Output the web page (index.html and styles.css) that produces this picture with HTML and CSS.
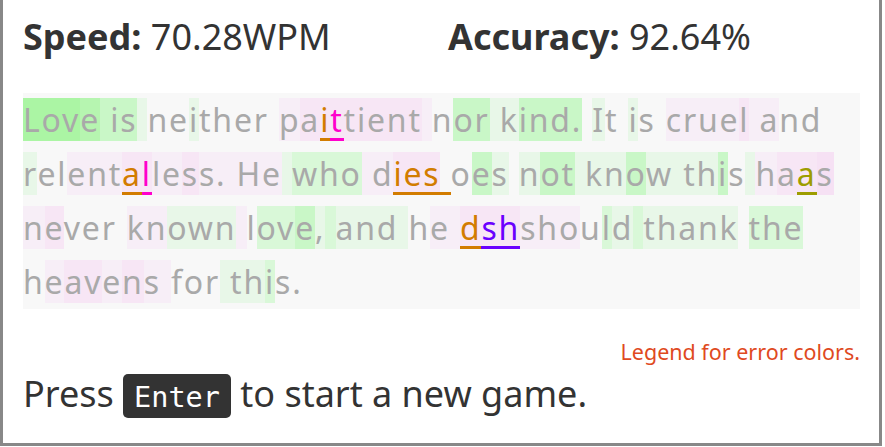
FILE: index.html
```html
<!DOCTYPE html>
<html lang="en">
<head>
<meta charset="utf-8">
<title>Typing result</title>
<link rel="stylesheet" href="styles.css">
</head>
<body>
<div class="game">
  <div class="stats">
    <div class="stat stat-speed"><b>Speed:</b> 70.28WPM</div>
    <div class="stat"><b>Accuracy:</b> 92.64%</div>
  </div>
  <div class="passage">
    <div class="line"><span class="g1">Lov</span><span class="g1b">e</span><span class="g3"> is</span><span class="g5"> </span>ne<span class="g5">i</span>ther <span class="p3">p</span><span class="p2">a<span class="e-or">i</span><span class="e-mg">t</span>tient</span><span class="p3"> </span>n<span class="g3">or</span><span class="g5"> k</span><span class="g3">ind.</span> <span class="g5">I</span>t <span class="g5">i</span>s <span class="p3">crue</span><span class="p2">l</span><span class="p3"> a</span>nd</div>
    <div class="line"><span class="g5">r</span>el<span class="p3">ent</span><span class="p2"><span class="e-or">a</span><span class="e-mg">l</span></span><span class="p3">le</span><span class="p2">s</span><span class="p3">s. He</span><span class="g5"> </span><span class="g4">who</span><span class="p3"> d</span><span class="p2"><span class="e-or">ies</span></span><span class="e-or"> </span>o<span class="g3">e</span><span class="g5">s</span> <span class="g5">n</span><span class="g3">ot</span><span class="g5"> kn</span><span class="g3">o</span><span class="g5">w th</span><span class="g3">i</span>s<span class="g5"> </span><span class="p3">h</span><span class="p2">a<span class="e-ol">a</span></span><span class="p1">s</span></div>
    <div class="line"><span class="p3">n</span><span class="p2">e</span>ver <span class="p3">kn</span><span class="g5">own</span><span class="p3"> </span>l<span class="g4">ov</span><span class="g3">e</span><span class="g5">,</span><span class="g4"> </span><span class="g5">and </span>h<span class="p3">e </span><span class="p2"><span class="e-or">d</span><span class="e-pu">sh</span></span><span class="p3">sho</span>u<span class="g4">l</span><span class="g5">d</span><span class="g4"> </span><span class="g5">thank</span> <span class="g4">the</span></div>
    <div class="line">h<span class="p3">e</span><span class="p2">av</span><span class="p3">e</span><span class="p2">n</span><span class="p3">s </span>for<span class="g5"> th</span><span class="g4">i</span>s.</div>
  </div>
  <div class="legend">Legend for error colors.</div>
  <div class="restart">Press <kbd class="key">Enter</kbd> to start a new game.</div>
</div>
</body>
</html>
```
FILE: styles.css
```css
html, body {
  margin: 0;
  padding: 0;
  background: #ffffff;
}

body {
  font-family: "Noto Sans", "DejaVu Sans", sans-serif;
  color: #333333;
}

.game {
  width: 882px;
  border: 3px solid #888888;
  border-top: 0;
  padding: 0 19px 23px 20px;
  box-sizing: border-box;
}

.stats {
  display: flex;
  padding-top: 15px;
  font-size: 36px;
  line-height: 44px;
}

.stat-speed {
  width: 425px;
}

.stat b {
  font-weight: 700;
}

.passage {
  margin-top: 34px;
  background: #f8f8f8;
  color: #a9a9a9;
  font-size: 32px;
  letter-spacing: 1.8px;
  line-height: 54px;
}

.line {
  height: 54px;
  white-space: pre;
}

.g1  { background: #abf5a4; }
.g1b { background: #b6f5b0; }
.g3  { background: #c9f7c7; }
.g4  { background: #d9f8d8; }
.g5  { background: #e8f7e8; }
.p1  { background: #f6e1f4; }
.p2  { background: #f7e6f5; }
.p3  { background: #f7eef7; }

.e-or { color: #d27c00; box-shadow: inset 0 -3px 0 #d27c00; }
.e-mg { color: #ff00cc; box-shadow: inset 0 -3px 0 #ff00cc; }
.e-ol { color: #9d9d00; box-shadow: inset 0 -3px 0 #9d9d00; }
.e-pu { color: #6a00ff; box-shadow: inset 0 -3px 0 #6a00ff; }

.legend {
  margin-top: 30px;
  text-align: right;
  color: #df4a1f;
  font-size: 21.5px;
  line-height: 25px;
}

.restart {
  margin-top: 8px;
  font-size: 36px;
  line-height: 44px;
}

.key {
  font-family: "DejaVu Sans Mono", "Liberation Mono", monospace;
  font-size: 28.5px;
  background: #333333;
  color: #ffffff;
  border-radius: 5px;
  padding: 7px 11px 4px;
}
```
